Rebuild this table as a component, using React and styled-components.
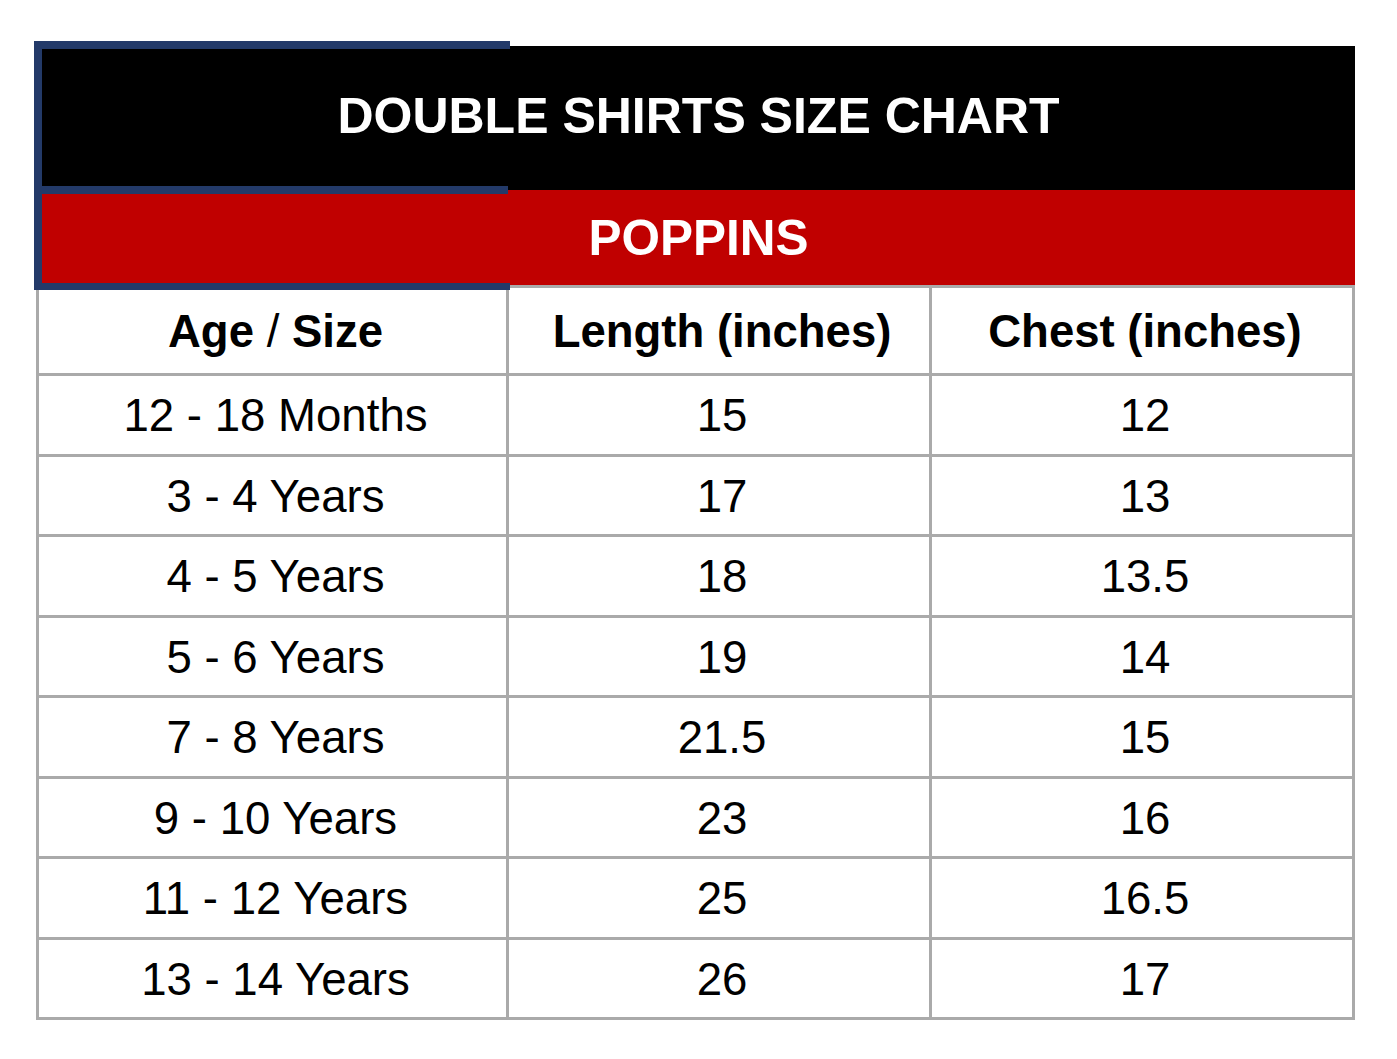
import React from "react";
import styled, { createGlobalStyle } from "styled-components";

const GlobalStyle = createGlobalStyle`
  html, body {
    margin: 0;
    padding: 0;
    background: #ffffff;
  }
  body {
    font-family: "Liberation Sans", Arial, Helvetica, sans-serif;
  }
`;

const Page = styled.div`
  width: 1397px;
  height: 1059px;
  padding: 46px 0 0 36px;
  box-sizing: border-box;
  background: #ffffff;
`;

const Sheet = styled.div`
  position: relative;
  width: 1319px;
  display: flex;
  flex-direction: column;
`;

const Band = styled.div`
  display: flex;
  align-items: center;
  justify-content: center;
  height: ${(p) => p.$h}px;
  background: ${(p) => p.$bg};
  color: #ffffff;
  font-weight: 700;
  font-size: ${(p) => p.$fs}px;
  padding-left: 6px;
  padding-bottom: ${(p) => p.$pb || 0}px;
  box-sizing: border-box;
`;

const Grid = styled.div`
  display: grid;
  grid-template-columns: 467px 420px 420px;
  grid-template-rows: 85px repeat(8, 77.5px);
  gap: 3px;
  padding: 3px;
  background: #aaaaaa;
`;

const Cell = styled.div`
  background: #ffffff;
  display: flex;
  align-items: center;
  justify-content: center;
  padding: ${(p) => (p.$head ? "2px 0 0 6px" : "3px 0 0 6px")};
  box-sizing: border-box;
  color: #000000;
  font-size: ${(p) => (p.$head ? "45.5px" : "45.6px")};
  font-weight: ${(p) => (p.$head ? 700 : 400)};
  white-space: pre;
`;

const Slash = styled.span`
  font-weight: 400;
`;

const Selection = styled.div`
  position: absolute;
  left: -2px;
  top: -5px;
  width: 476px;
  height: 249px;
  border-top: 8px solid #233a69;
  border-left: 8px solid #233a69;
  border-bottom: 7px solid #233a69;
  box-sizing: border-box;
  pointer-events: none;
`;

const SelectionDivider = styled.div`
  position: absolute;
  left: -2px;
  top: 140px;
  width: 474px;
  height: 8px;
  background: #233a69;
  pointer-events: none;
`;

const rows = [
  ["12 - 18 Months", "15", "12"],
  ["3 - 4 Years", "17", "13"],
  ["4 - 5 Years", "18", "13.5"],
  ["5 - 6 Years", "19", "14"],
  ["7 - 8 Years", "21.5", "15"],
  ["9 - 10 Years", "23", "16"],
  ["11 - 12 Years", "25", "16.5"],
  ["13 - 14 Years", "26", "17"],
];

export default function App() {
  return (
    <>
      <GlobalStyle />
      <Page>
        <Sheet>
          <Band $h={144} $bg="#000000" $fs={50} $pb={5}>
            DOUBLE SHIRTS SIZE CHART
          </Band>
          <Band $h={95} $bg="#c00000" $fs={49.5}>
            POPPINS
          </Band>
          <Grid>
            <Cell $head>
              Age <Slash>/</Slash> Size
            </Cell>
            <Cell $head>Length (inches)</Cell>
            <Cell $head>Chest (inches)</Cell>
            {rows.map((r) =>
              r.map((v, i) => <Cell key={r[0] + i}>{v}</Cell>)
            )}
          </Grid>
          <Selection />
          <SelectionDivider />
        </Sheet>
      </Page>
    </>
  );
}
